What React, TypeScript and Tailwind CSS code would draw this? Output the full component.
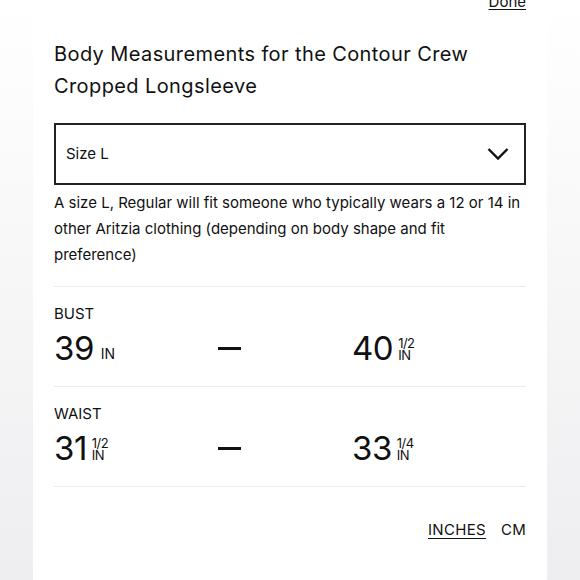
type Value = { whole: string; frac?: string }
type Row = { label: string; from: Value; to: Value }

const rows: Row[] = [
  { label: 'BUST', from: { whole: '39' }, to: { whole: '40', frac: '1/2' } },
  { label: 'WAIST', from: { whole: '31', frac: '1/2' }, to: { whole: '33', frac: '1/4' } },
]

function Measure({ value }: { value: Value }) {
  return (
    <div className="flex items-end">
      <span className="text-[33px] leading-none tracking-[-0.5px]">{value.whole}</span>
      {value.frac ? (
        <span className="mb-[4px] ml-[5px] flex flex-col text-[13px] leading-[12px] tracking-[-0.5px]">
          <span>{value.frac}</span>
          <span>IN</span>
        </span>
      ) : (
        <span className="mb-[4px] ml-[7px] text-[14px] leading-none">IN</span>
      )}
    </div>
  )
}

export default function App() {
  return (
    <div className="min-h-[580px] bg-gradient-to-b from-white to-[#eeeef0] font-['Inter',sans-serif] text-[#111]">
      <div className="mx-auto h-[580px] w-[514px] overflow-hidden bg-white px-[21px]">
        <div className="-mt-[8px] flex justify-end">
          <span className="text-[15px] leading-[20px] underline underline-offset-2">Done</span>
        </div>

        <h1 className="mt-[26px] text-[20px] leading-[32px] tracking-[0.4px]">
          Body Measurements for the Contour Crew Cropped Longsleeve
        </h1>

        <div className="mt-[21px] flex h-[62px] items-center justify-between border-2 border-[#222] pl-[10px] pr-[15px]">
          <span className="text-[15px]">Size L</span>
          <svg width="22" height="14" viewBox="0 0 22 14" fill="none" stroke="#111" strokeWidth="2.4" aria-hidden="true">
            <polyline points="1.5,2 11,11.5 20.5,2" />
          </svg>
        </div>

        <p className="mt-[5px] text-[15px] leading-[26px]">
          A size L, Regular will fit someone who typically wears a 12 or 14 in other Aritzia clothing (depending on body shape and fit preference)
        </p>

        <div className="mt-[18px]">
          {rows.map((row) => (
            <section key={row.label} className="border-t border-[#ececec] pb-[20px] pt-[17px]">
              <div className="text-[15px] leading-[20px]">{row.label}</div>
              <div className="mt-[6px] grid h-[36px] grid-cols-[164px_134px_1fr] items-center">
                <Measure value={row.from} />
                <span className="block h-[3px] w-[23px] bg-[#111]" aria-label="to" />
                <Measure value={row.to} />
              </div>
            </section>
          ))}
          <div className="border-t border-[#ececec]" />
        </div>

        <div className="mt-[33px] flex justify-end gap-[15px] text-[15px] leading-[20px] tracking-[0.3px]">
          <span className="underline underline-offset-[3px]">INCHES</span>
          <span>CM</span>
        </div>
      </div>
    </div>
  )
}
